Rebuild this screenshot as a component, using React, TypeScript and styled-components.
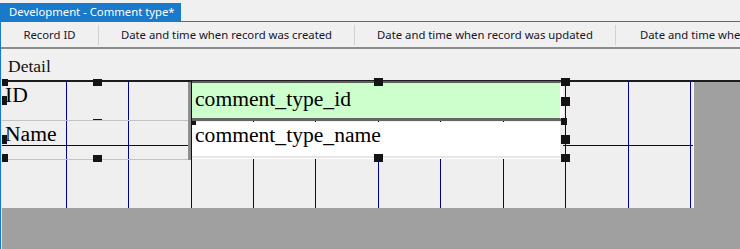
import React, { FunctionComponent } from 'react';
import styled, { createGlobalStyle } from 'styled-components';

const GlobalStyle = createGlobalStyle`
    html, body {
        margin: 0;
        padding: 0;
        background: #f0f0f0;
        font-family: "Noto Sans", "Liberation Sans", sans-serif;
    }
`

const Window = styled.div`
    width: 740px;
    height: 249px;
    display: flex;
    flex-direction: column;
    overflow: hidden;
    background: #f0f0f0;
`

const TabStrip = styled.div`
    height: 21px;
    display: flex;
    align-items: flex-end;
    border-bottom: 1px solid #1979ca;
`

const Tab = styled.div`
    height: 18px;
    width: 181px;
    box-sizing: border-box;
    padding-left: 9px;
    background: #1979ca;
    color: #ffffff;
    font-size: 11.3px;
    line-height: 18px;
    white-space: nowrap;
`

const Body = styled.div`
    flex: 1;
    display: flex;
    flex-direction: column;
    border-left: 1px solid #1979ca;
`

const HeaderRow = styled.div`
    height: 25px;
    display: flex;
    align-items: center;
    border-bottom: 2px solid #8c8c8c;
    background: #f0f0f0;
`

const HeaderCell = styled.div<{ $w?: number; $left?: boolean }>`
    ${p => p.$w ? `width: ${p.$w}px;` : 'flex: 1;'}
    flex-shrink: 0;
    box-sizing: border-box;
    padding-left: ${p => p.$left ? '24px' : '0'};
    text-align: ${p => p.$left ? 'left' : 'center'};
    font-size: 11.3px;
    color: #15152a;
    white-space: nowrap;
    overflow: hidden;
`

const Sep = styled.div`
    width: 1px;
    height: 20px;
    background: #d2d2d2;
    flex-shrink: 0;
`

const Designer = styled.div`
    flex: 1;
    display: flex;
    flex-direction: column;
    border-left: 1px solid #e6e6e6;
    background: #a0a0a0;
`

const SectionBar = styled.div`
    height: 33px;
    box-sizing: border-box;
    padding: 7px 0 0 6px;
    background: #f0f0f0;
    border-bottom: 2px solid #1c1c1c;
    font-family: "Liberation Serif", serif;
    font-size: 17.5px;
    color: #111;
`

const Canvas = styled.div`
    position: relative;
    width: 691px;
    height: 126px;
    background: #efefef;
    border-right: 1px solid #f8f8f8;
`

const Grid = styled.svg`
    position: absolute;
    left: 0;
    top: 0;
`

const LabelFrame = styled.div`
    position: absolute;
    left: 0;
    top: 0;
    width: 186px;
    border-right: 3px solid #8e8e8e;
`

const LabelRow = styled.div`
    height: 37px;
    box-sizing: content-box;
    padding: 1px 0 0 3px;
    border-bottom: 1px solid #c4c4c4;
    font-family: "Liberation Serif", serif;
    font-size: 21.6px;
    color: #000;
`

const TextBox = styled.div<{ $top: number; $green?: boolean }>`
    position: absolute;
    left: 190px;
    top: ${p => p.$top}px;
    width: 371px;
    box-sizing: border-box;
    padding-left: 3px;
    font-family: "Liberation Serif", serif;
    font-size: 21.6px;
    color: #000;
    background: ${p => p.$green ? '#ccffcc' : '#ffffff'};
    border-right: 3px solid ${p => p.$green ? '#ffffff' : '#eeeeee'};
    ${p => p.$green
        ? `height: 40px; padding-top: 4px; border-top: 2px solid #5e5e5e; border-bottom: 3px solid #646464;`
        : `height: 36px; padding-top: 1px; border-bottom: 2px solid #e6e6e6; box-shadow: 0 1px 0 #ffffff;`}
`

const Handle = styled.div`
    position: absolute;
    background: #141414;
    z-index: 2;
`

const vLines = [64, 126, 189, 251, 313, 376, 438, 501, 563, 626, 688];

const handles: [number, number, number, number][] = [
    [0, -3, 6, 7], [0, 14, 5, 9], [0, 53, 5, 9], [0, 72, 6, 8],
    [91, -3, 9, 7], [91, 37, 9, 1], [91, 73, 9, 7],
    [372, -4, 9, 8], [372, 72, 9, 8],
    [559, -4, 9, 8], [559, 15, 9, 9], [559, 36, 6, 7], [559, 53, 9, 9], [559, 72, 9, 8],
    [190, 39, 4, 4],
];

const App: FunctionComponent<{}> = () => {
    return <>
        <GlobalStyle />
        <Window>
            <TabStrip>
                <Tab>Development - Comment type*</Tab>
            </TabStrip>
            <Body>
                <HeaderRow>
                    <HeaderCell $w={97}>Record ID</HeaderCell>
                    <Sep />
                    <HeaderCell $w={255}>Date and time when record was created</HeaderCell>
                    <Sep />
                    <HeaderCell $w={260}>Date and time when record was updated</HeaderCell>
                    <Sep />
                    <HeaderCell $left>Date and time whe</HeaderCell>
                </HeaderRow>
                <Designer>
                    <SectionBar>Detail</SectionBar>
                    <Canvas>
                        <Grid width={691} height={126}>
                            {vLines.map(x => (
                                <line key={x} x1={x + 0.5} y1={0} x2={x + 0.5} y2={126} stroke="#000099" strokeWidth={1} />
                            ))}
                            <line x1={0} y1={63.5} x2={691} y2={63.5} stroke="#000099" strokeWidth={1} />
                        </Grid>
                        <LabelFrame>
                            <LabelRow>ID</LabelRow>
                            <LabelRow>Name</LabelRow>
                        </LabelFrame>
                        <TextBox $top={-1} $green>comment_type_id</TextBox>
                        <TextBox $top={40}>comment_type_name</TextBox>
                        {handles.map(([x, y, w, h], i) => (
                            <Handle key={i} style={{ left: x, top: y, width: w, height: h }} />
                        ))}
                    </Canvas>
                </Designer>
            </Body>
        </Window>
    </>;
}

export default App;
